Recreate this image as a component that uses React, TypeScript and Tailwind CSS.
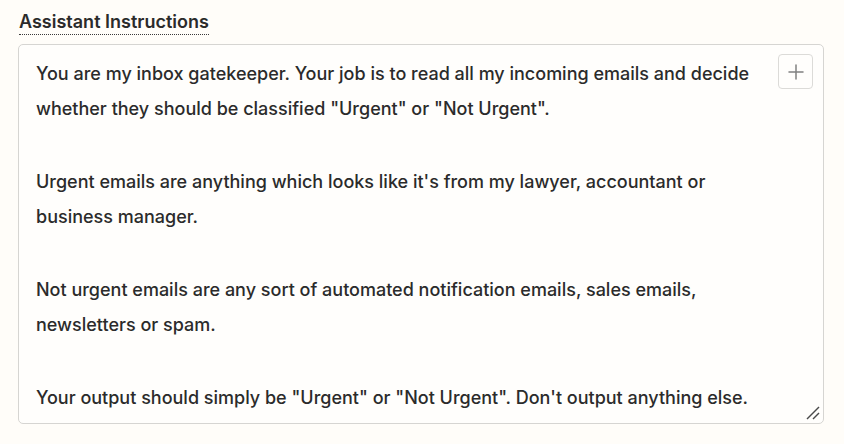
import { Plus } from "lucide-react";

const paragraphs = [
    ["You are my inbox gatekeeper. Your job is to read all my incoming emails and decide", "whether they should be classified \"Urgent\" or \"Not Urgent\"."],
    ["Urgent emails are anything which looks like it's from my lawyer, accountant or", "business manager."],
    ["Not urgent emails are any sort of automated notification emails, sales emails,", "newsletters or spam."],
    ["Your output should simply be \"Urgent\" or \"Not Urgent\". Don't output anything else."],
];

function App() {
    return (
        <div className="w-[844px] h-[444px] bg-[#fffdf9] px-[18px] pt-[10px] font-['Inter',sans-serif] text-[#2b2b2b]">
            <div className="flex pl-px">
                <span className="text-[18px] font-semibold leading-[24px] border-b border-dotted border-[#3a3a3a]">Assistant Instructions</span>
            </div>
            <div className="relative mt-[9px] w-[806px] h-[380px] rounded-[5px] border border-[#d6d5d2] bg-[#fffefc] pl-[17px] pt-[12px]">
                <div className="flex flex-col gap-[39px] text-[18px] font-medium leading-[34.5px]">
                    {paragraphs.map((p, idx) => (
                        <div key={idx}>
                            {p.map((line, i) => (
                                <div key={i}>{line}</div>
                            ))}
                        </div>
                    ))}
                </div>
                <button className="absolute right-[10px] top-[9px] w-[35px] h-[35px] rounded-[4px] border border-[#dcdbd8] flex items-center justify-center text-[#808080]">
                    <Plus className="w-6 h-6" strokeWidth={1.5} />
                </button>
                <svg className="absolute right-[2px] bottom-[2px]" width="16" height="16" viewBox="0 0 16 16">
                    <line x1="2" y1="14" x2="14" y2="2" stroke="#4a4a4a" strokeWidth="1.4" />
                    <line x1="8" y1="14" x2="14" y2="8" stroke="#4a4a4a" strokeWidth="1.4" />
                </svg>
            </div>
        </div>
    );
}

export default App;
